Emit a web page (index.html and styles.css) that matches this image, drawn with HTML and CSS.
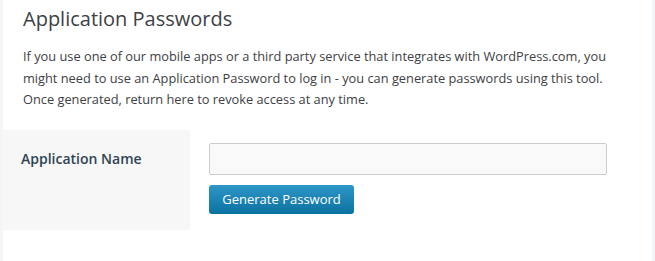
FILE: index.html
```html
<!DOCTYPE html>
<html>
<head>
    <title>Application Passwords</title>
    <link rel="stylesheet" href="styles.css">
</head>
<body>
    <div class="card">
        <h2 class="title">Application Passwords</h2>
        <p class="intro">If you use one of our mobile apps or a third party service that integrates with WordPress.com, you might need to use an Application Password to log in - you can generate passwords using this tool. Once generated, return here to revoke access at any time.</p>

        <!-- Formulario para crear una contraseña -->
        <form class="app-form">
            <div class="label-cell">
                <label for="appName">Application Name</label>
            </div>
            <div class="field-cell">
                <input type="text" id="appName" class="text-input">
                <button type="button" class="button-primary">Generate Password</button>
            </div>
        </form>
    </div>
</body>
</html>
```

FILE: styles.css
```css
body {
    font-family: "Open Sans", "Noto Sans", sans-serif;
    margin: 0;
    padding: 0;
    background-color: #f3f6f8;
    color: #2e4453;
}

.card {
    background-color: #fff;
    margin: 0 3px;
    height: 261px;
    box-sizing: border-box;
    padding-top: 4px;
}

.title {
    font-size: 20px;
    font-weight: normal;
    color: #3d4145;
    margin: 0 0 0 20px;
    line-height: 30px;
}

.intro {
    font-size: 12.8px;
    line-height: 21.5px;
    color: #3d4145;
    margin: 12px 25px 0 20px;
}

.app-form {
    display: flex;
    margin-top: 19px;
}

.label-cell {
    background-color: #f7f7f7;
    width: 187px;
    height: 100px;
    padding: 17px 0 0 18px;
    box-sizing: border-box;
}

.label-cell label {
    font-size: 14px;
    font-weight: 600;
    color: #2e4453;
}

.field-cell {
    display: flex;
    flex-direction: column;
    align-items: flex-start;
    gap: 10px;
    padding: 13px 0 0 19px;
}

.text-input {
    width: 398px;
    height: 32px;
    box-sizing: border-box;
    border: 1px solid #ccc;
    border-radius: 2px;
    background-color: #f9f9f9;
    margin: 0;
}

.button-primary {
    font-family: "Open Sans", "Noto Sans", sans-serif;
    font-size: 13px;
    color: #fff;
    height: 29px;
    width: 145px;
    padding: 0;
    border: none;
    border-radius: 3px;
    background: linear-gradient(#2e95c8, #0b72a0);
    cursor: pointer;
}
```
